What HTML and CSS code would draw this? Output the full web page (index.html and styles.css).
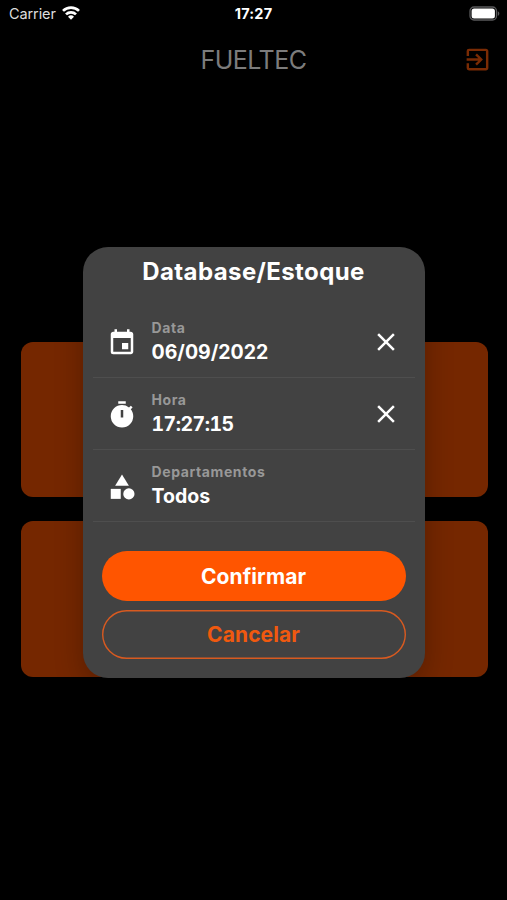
FILE: index.html
```html
<!DOCTYPE html>
<html lang="pt">
<head>
<meta charset="utf-8">
<title>FUELTEC</title>
<link rel="stylesheet" href="styles.css">
</head>
<body>
<div class="screen">
  <header class="status">
    <div class="carrier"><span class="carrier-name">Carrier</span>
      <svg class="wifi" width="18" height="14" viewBox="0 0 18 14"><g fill="none" stroke="#fff" stroke-width="2.7"><path d="M1 4.9a11.4 11.4 0 0 1 16 0"/><path d="M4 8.4a7.1 7.1 0 0 1 10 0"/></g><path fill="#fff" d="M6 10.8a4.3 4.3 0 0 1 6 0l-3 3z"/></svg>
    </div>
    <span class="clock">17:27</span>
    <svg class="battery" width="31" height="15" viewBox="0 0 31 15"><rect x="1" y="1" width="26.5" height="13" rx="4" fill="none" stroke="#59595b" stroke-width="1.3"/><rect x="2.6" y="2.6" width="23.3" height="9.8" rx="2.5" fill="#fff"/><path fill="#59595b" d="M28.8 5.2c2 .8 2 3.8 0 4.6z"/></svg>
  </header>
  <div class="appbar">
    <h1 class="brand">FUELTEC</h1>
    <svg class="exit" width="29" height="29" viewBox="0 0 24 24"><path d="M10.09 15.59 11.5 17l5-5-5-5-1.41 1.41L12.67 11H3v2h9.67zM19 3H5a2 2 0 0 0-2 2v4h2V5h14v14H5v-4H3v4a2 2 0 0 0 2 2h14c1.100 0 2-.9 2-2V5c0-1.100-.9-2-2-2z"/></svg>
  </div>
  <main class="cards"><div class="card"></div><div class="card"></div></main>
  <div class="overlay">
    <section class="dialog">
      <h2 class="title"><span>Database/Estoque</span></h2>
      <div class="row">
        <svg class="icon" viewBox="0 0 24 24"><path d="M17 12h-5v5h5zM16 1v2H8V1H6v2H5c-1.110 0-2 .9-2 2v14a2 2 0 0 0 2 2h14c1.100 0 2-.9 2-2V5c0-1.100-.9-2-2-2h-1V1zm3 18H5V8h14z"/></svg>
        <div class="field"><span class="label">Data</span><span class="value date">06/09/2022</span></div>
        <svg class="close" viewBox="0 0 24 24"><path d="M19 6.410 17.590 5 12 10.590 6.410 5 5 6.410 10.590 12 5 17.590 6.410 19 12 13.410 17.590 19 19 17.590 13.410 12z"/></svg>
      </div>
      <div class="row">
        <svg class="icon" viewBox="0 0 24 24"><path d="M9 1h6v2H9zM19.030 7.390l1.420-1.420c-.43-.51-.9-.99-1.410-1.410l-1.420 1.420A8.960 8.960 0 0 0 12 4a9 9 0 1 0 9 9c0-2.120-.74-4.070-1.970-5.610zM13 14h-2V8h2z"/></svg>
        <div class="field"><span class="label">Hora</span><span class="value time">17:27:15</span></div>
        <svg class="close" viewBox="0 0 24 24"><path d="M19 6.410 17.590 5 12 10.590 6.410 5 5 6.410 10.590 12 5 17.590 6.410 19 12 13.410 17.590 19 19 17.590 13.410 12z"/></svg>
      </div>
      <div class="row">
        <svg class="icon" viewBox="0 0 24 24"><path d="m12 2-5.500 9h11z"/><circle cx="17.500" cy="17.500" r="4.500"/><path d="M3 13.500h8v8H3z"/></svg>
        <div class="field"><span class="label">Departamentos</span><span class="value">Todos</span></div>
      </div>
      <div class="actions">
        <button class="btn confirm">Confirmar</button>
        <button class="btn cancel">Cancelar</button>
      </div>
    </section>
  </div>
</div>
</body>
</html>
```
FILE: styles.css
```css
* { box-sizing: border-box; }
body { margin: 0; background: #000; font-family: Inter, "Liberation Sans", sans-serif; }
.screen { position: relative; width: 507px; height: 900px; overflow: hidden; background: #000; }
.status { display: grid; grid-template-columns: 1fr auto 1fr; align-items: center; height: 27px; padding: 0 7px 0 9px; color: #fff; }
.carrier { display: flex; align-items: center; gap: 6px; }
.carrier-name { font-size: 14.5px; color: #ddd; letter-spacing: -0.1px; }
.wifi { margin-top: -1px; }
.clock { font-size: 14.5px; font-weight: 700; letter-spacing: 0.2px; margin-left: -2px; }
.battery { justify-self: end; margin-top: -1px; }
.appbar { display: grid; grid-template-columns: 1fr auto 1fr; align-items: center; height: 64px; padding: 0 15px; }
.brand { grid-column: 2; margin: 1px 0 0; font-size: 25px; font-weight: 400; letter-spacing: -0.5px; color: #7c7c7c; }
.exit { justify-self: end; fill: #7a2b04; }
.cards { display: flex; flex-direction: column; gap: 24px; padding: 250.500px 19.500px 0 20.500px; }
.card { height: 155.500px; border-radius: 12px; background: #752700; }
.overlay { position: absolute; inset: 0; display: flex; justify-content: center; align-items: flex-start; padding-top: 247px; }
.dialog { width: 342px; height: 431px; border-radius: 25px; background: #424242; padding: 0 10px; color: #fff; box-shadow: 0 10px 28px rgba(0,0,0,.25); }
.title { margin: 0; height: 59px; padding-top: 9px; text-align: center; font-size: 24px; line-height: 32px; font-weight: 700; letter-spacing: 0.4px; }
.row { display: flex; align-items: center; height: 72px; padding: 0 14px; border-bottom: 1px solid #4e4e4e; }
.icon { width: 30px; height: 30px; margin-top: 2px; fill: #fff; }
.field { display: flex; flex: 1; flex-direction: column; margin-left: 15px; }
.label { font-size: 14px; line-height: 20px; font-weight: 700; color: #989898; letter-spacing: 0.6px; }
.value { font-size: 19.500px; line-height: 28px; font-weight: 700; }
.time { font-variant-numeric: tabular-nums; letter-spacing: -0.5px; }
.close { width: 30px; height: 30px; margin-top: 1px; fill: #fff; }
.actions { display: flex; flex-direction: column; gap: 9px; padding: 29px 9px 0; }
.btn { height: 49.500px; padding: 0; border: 0; border-radius: 25px; font: 700 21px/49px Inter, sans-serif; text-align: center; letter-spacing: 0.1px; }
.confirm { padding-top: 1px; background: #ff5500; color: #fff; }
.cancel { background: transparent; box-shadow: inset 0 0 0 1.400px #d85a20; color: #f0590f; }
```
